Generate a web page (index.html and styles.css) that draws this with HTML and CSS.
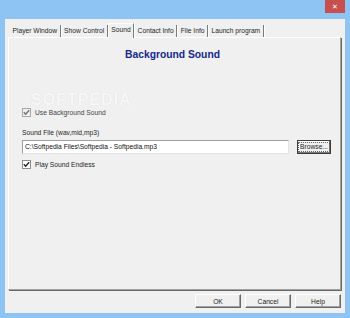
FILE: index.html
```html
<!DOCTYPE html>
<html lang="en">
  <head>
    <meta charset="UTF-8" />
    <title>Background Sound</title>
    <link rel="stylesheet" href="styles.css">
  </head>
  <body>
    <div class="window">
      <div class="titlebar">
        <div class="close">&#x2715;</div>
      </div>
      <div class="client">
        <div class="tabs">
          <div class="tab">Player Window</div>
          <div class="tab">Show Control</div>
          <div class="tab active">Sound</div>
          <div class="tab">Contact Info</div>
          <div class="tab">File Info</div>
          <div class="tab">Launch program</div>
        </div>
        <div class="panel">
          <h1>Background Sound</h1>
          <div class="watermark">SOFTPEDIA</div>
          <label class="check disabled">
            <span class="box">
              <svg width="7" height="7" viewBox="0 0 7 7"><polyline points="0.8,3.2 2.6,5.2 6.2,1.2" /></svg>
            </span>
            Use Background Sound
          </label>
          <div class="field-label">Sound File (wav,mid,mp3)</div>
          <div class="file-row">
            <div class="input">C:\Softpedia Files\Softpedia - Softpedia.mp3</div>
            <div class="browse"><span>Browse...</span></div>
          </div>
          <label class="check">
            <span class="box">
              <svg width="7" height="7" viewBox="0 0 7 7"><polyline points="0.8,3.2 2.6,5.2 6.2,1.2" /></svg>
            </span>
            Play Sound Endless
          </label>
        </div>
        <div class="buttons">
          <div class="button">OK</div>
          <div class="button">Cancel</div>
          <div class="button">Help</div>
        </div>
      </div>
    </div>
  </body>
</html>
```

FILE: styles.css
```css
body {
  margin: 0;
  padding: 0;
  font-family: "Liberation Sans", Arial, sans-serif;
  font-size: 6.7px;
  color: #1e1e1e;
}

.window {
  width: 350px;
  height: 318px;
  box-sizing: border-box;
  background-color: #8dc4f4;
  padding: 0 5px 5px 5px;
  display: flex;
  flex-direction: column;
}

.titlebar {
  height: 19px;
  display: flex;
  justify-content: flex-end;
}

.close {
  width: 20px;
  height: 13px;
  background-color: #c7504f;
  color: #fff;
  font-family: "DejaVu Sans", sans-serif;
  font-size: 7px;
  font-weight: bold;
  display: flex;
  align-items: center;
  justify-content: center;
}

.client {
  flex: 1;
  background-color: #f0f0f0;
  display: flex;
  flex-direction: column;
  padding: 4px 4px 5px 3px;
}

.tabs {
  display: flex;
  padding-left: 2px;
  height: 14px;
  align-items: flex-end;
}

.tab {
  height: 12px;
  line-height: 12px;
  padding: 0 2.5px;
  border-right: 1px solid #7a7a7a;
  box-shadow: 1px 0 0 #fff;
  margin-right: 1px;
}

.tab.active {
  height: 14px;
  line-height: 12px;
  background-color: #f0f0f0;
  border-top: 1px solid #fff;
  border-left: 1px solid #fff;
  margin-left: -1px;
  position: relative;
  z-index: 1;
  margin-bottom: -1px;
}

.panel {
  position: relative;
  height: 253px;
  box-sizing: border-box;
  border-top: 1px solid #fff;
  border-left: 1px solid #fff;
  border-right: 1px solid #a0a0a0;
  border-bottom: 1px solid #a0a0a0;
  box-shadow: 1px 1px 0 #696969;
  padding: 0 9px 0 13px;
  display: flex;
  flex-direction: column;
}

h1 {
  margin: 11px 0 0 0;
  padding-right: 8px;
  text-align: center;
  font-size: 10.3px;
  line-height: 12px;
  color: #15278c;
}

.watermark {
  position: absolute;
  left: 22px;
  top: 53px;
  font-size: 16px;
  font-weight: bold;
  letter-spacing: 1px;
  color: #f7f7f7;
  text-shadow: 0 0 1px rgba(0, 0, 0, 0.1);
}

.check {
  display: flex;
  align-items: center;
  height: 9px;
}

.check .box {
  width: 7px;
  height: 7px;
  border: 1px solid #8e8f8f;
  background-color: #fff;
  margin-right: 4px;
  display: flex;
  align-items: center;
  justify-content: center;
}

.check svg polyline {
  fill: none;
  stroke: #222;
  stroke-width: 1.3;
}

.check.disabled {
  margin-top: 47px;
  color: #444;
}

.check.disabled .box {
  background-color: #f0f0f0;
  border-color: #a8a8a8;
}

.check.disabled svg polyline {
  stroke: #6d6d6d;
}

.field-label {
  margin-top: 11px;
  height: 9px;
  line-height: 9px;
}

.file-row {
  display: flex;
  align-items: center;
  margin-top: 3px;
}

.input {
  width: 268px;
  height: 14px;
  box-sizing: border-box;
  background-color: #fff;
  border-top: 1px solid #a0a0a0;
  border-left: 1px solid #a0a0a0;
  border-right: 1px solid #e3e3e3;
  border-bottom: 1px solid #e3e3e3;
  padding-left: 2px;
  line-height: 12px;
  color: #111;
}

.browse {
  margin-left: 8px;
  width: 34px;
  height: 14px;
  box-sizing: border-box;
  border: 1px solid #3c3c3c;
  box-shadow: inset -1px -1px 0 #7a7a7a, inset 1px 1px 0 #fff;
  display: flex;
  align-items: center;
  justify-content: center;
}

.browse span {
  border: 1px dotted #666;
  padding: 0 1px;
  line-height: 8px;
}

.file-row + .check {
  margin-top: 6px;
}

.buttons {
  display: flex;
  justify-content: flex-end;
  gap: 4px;
  margin-top: 4px;
}

.button {
  width: 46px;
  height: 14px;
  box-sizing: border-box;
  border-top: 1px solid #fff;
  border-left: 1px solid #fff;
  border-right: 1px solid #696969;
  border-bottom: 1px solid #696969;
  box-shadow: inset -1px -1px 0 #a0a0a0;
  display: flex;
  align-items: center;
  justify-content: center;
}
```
